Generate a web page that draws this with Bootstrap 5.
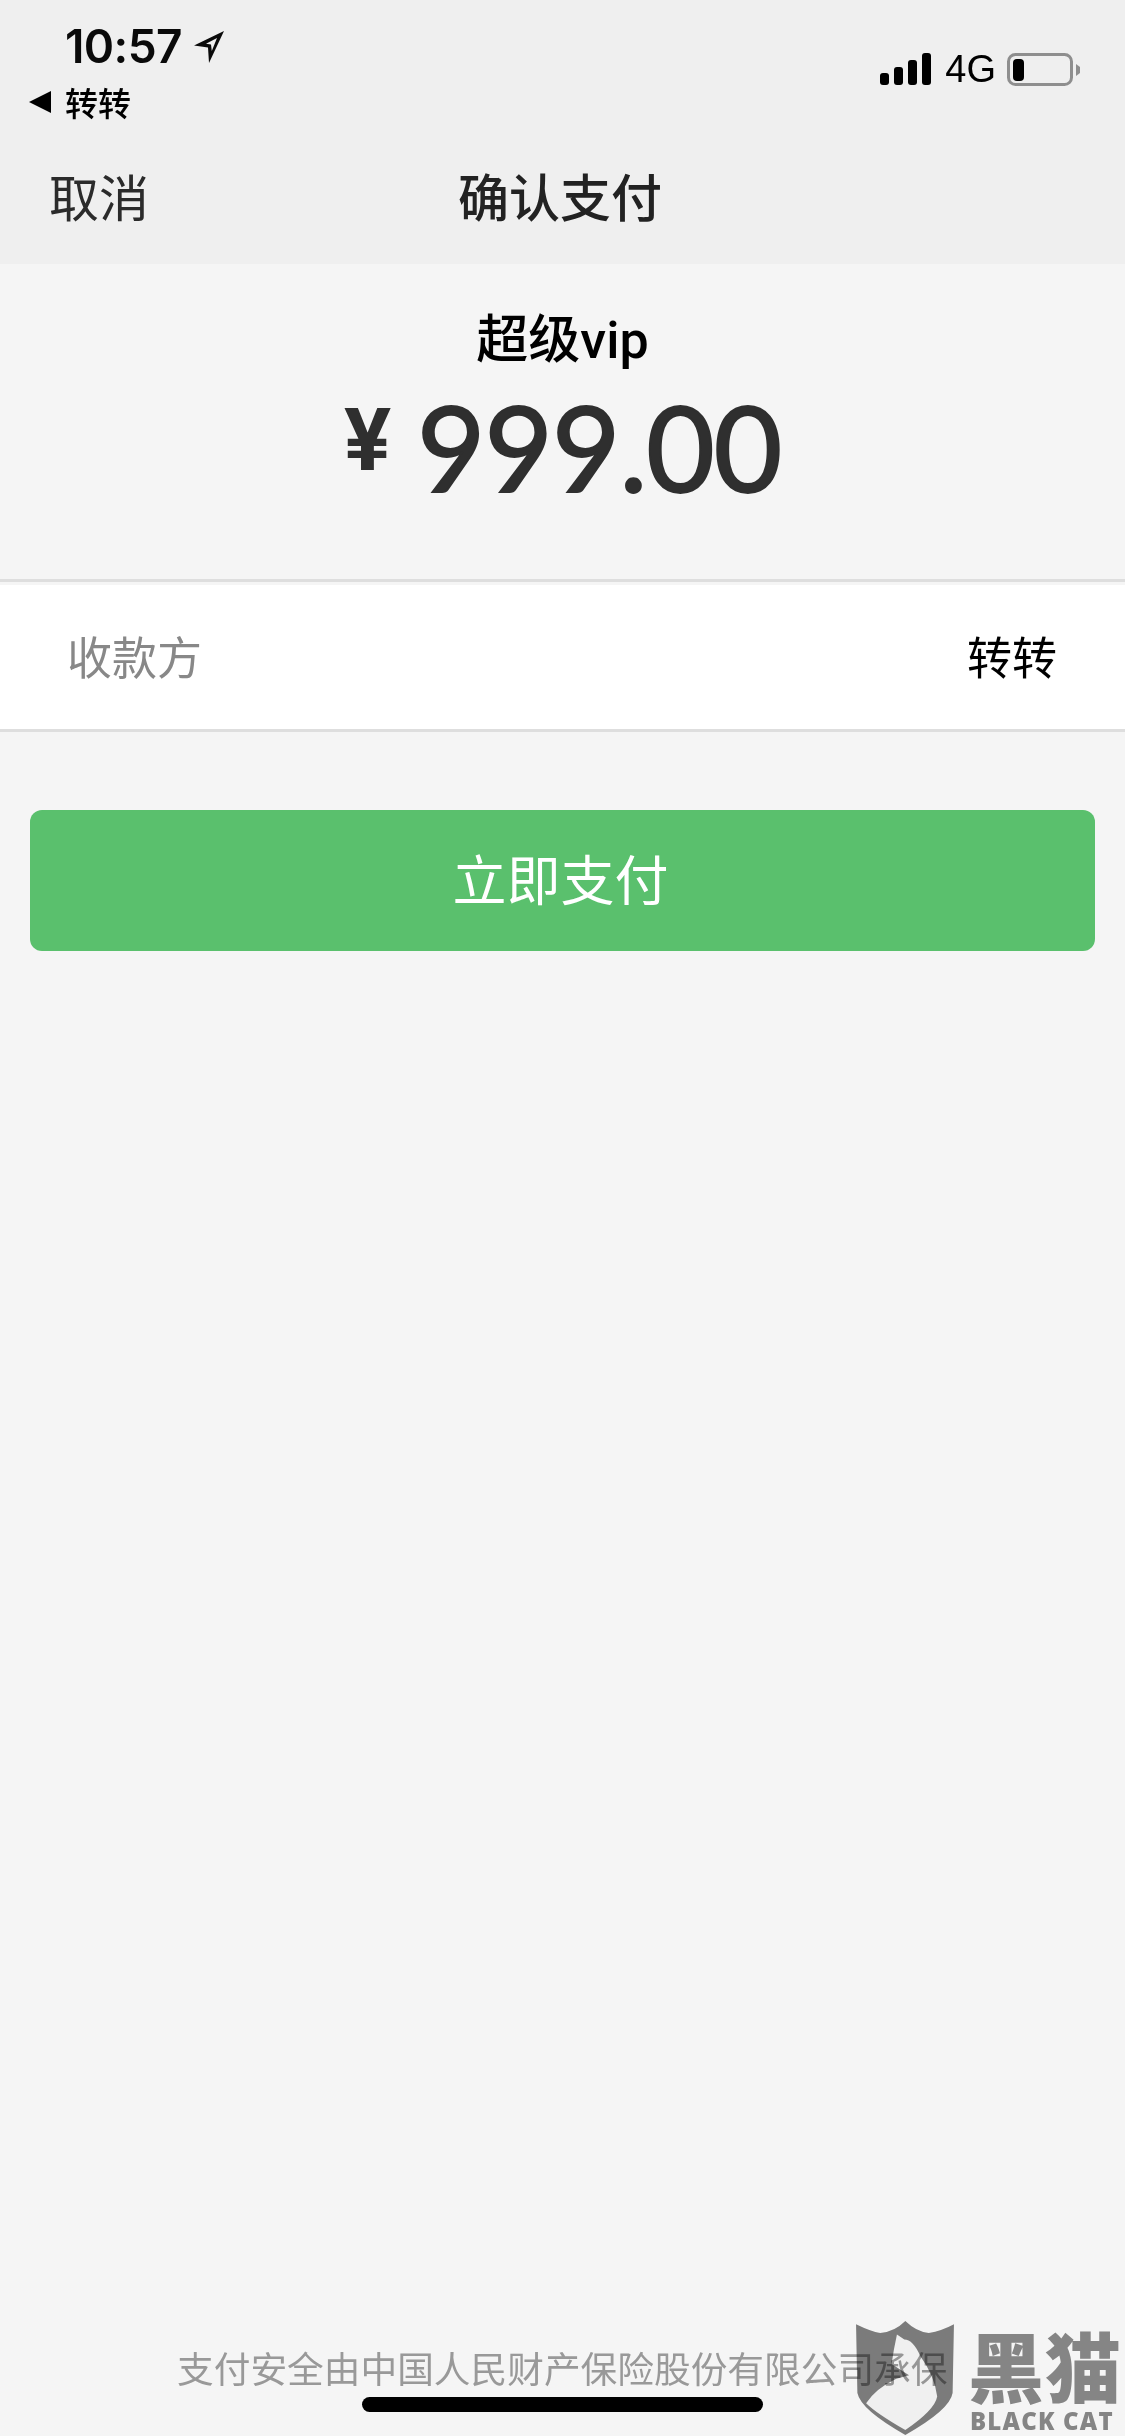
<!DOCTYPE html>
<html lang="zh-CN">
<head>
<meta charset="UTF-8">
<meta name="viewport" content="width=device-width, initial-scale=1.0">
<title>确认支付</title>
<link href="https://cdn.jsdelivr.net/npm/bootstrap@5.3.0/dist/css/bootstrap.min.css" rel="stylesheet">
<style>
html, body { margin: 0; background: #f5f5f5; }
body { font-family: "Liberation Sans", "Noto Sans CJK SC", sans-serif; }
.pay-page { width: 1125px; height: 2436px; overflow: hidden; background: #f5f5f5; font-family: "Noto Sans CJK SC", sans-serif; }

.top-area { height: 264px; background: #efefef; }
.status-row { height: 158px; padding: 0 44px 0 29px; }
.status-left { padding-top: 21px; }
.clock { font: 600 46px/50px Inter, sans-serif; color: #0a0a0a; margin-left: 36px; letter-spacing: -.6px; }
.loc-arrow { margin-left: 10px; margin-top: 2px; }
.back-app { font-size: 33px; line-height: 44px; color: #000; margin-top: 9px; font-weight: 500; }
.status-right { padding-top: 53px; }
.net-label { font: 400 38px/32px "Liberation Sans", sans-serif; color: #000; margin: 0 11px 0 13px; }
.title-row { height: 106px; padding: 7px 0 0 49px; }
.cancel-txt { font-size: 50px; line-height: 60px; color: #2b2b2b; }
.title-txt { font-size: 51px; line-height: 60px; color: #222; font-weight: 500; left: 560px; top: 7px; transform: translateX(-50%); }

.amount-area { height: 315px; padding-top: 37px; }
.prod-name { font-size: 52px; line-height: 70px; font-weight: 500; color: #000; }
.prod-name span { font-family: Roboto, sans-serif; }
.amount-row { margin-top: 11px; height: 120px; color: #2f2f2f; }
.yen { font: 700 88px/66px Roboto, sans-serif; margin-right: 26px; margin-top: 20px; }
.amount-num { font: 400 118px/120px Lato, sans-serif; letter-spacing: -1px; -webkit-text-stroke: 2px #2f2f2f; }

.payee-box { height: 153px; background: #fff; border-top: 3px solid #dedede; border-bottom: 3px solid #dedede; padding: 0 68px 0 67px; box-shadow: inset 0 3px 0 #f5f5f5; }
.payee-txt { font-size: 45px; color: #000; }
.payee-lbl { color: #888; }

.pay-wrap { padding: 78px 30px 0; }
.btn-pay { display: block; width: 100%; height: 141px; background: #5ac06d; border: 0; border-radius: 12px; color: #fff; font-size: 54px; line-height: 70px; padding: 0 4px 6px 0; }
.btn-pay:hover { background: #5ac06d; color: #fff; }

.insure-txt { position: absolute; left: 177px; top: 2344px; font-size: 36.7px; line-height: 46px; color: #999; white-space: nowrap; }
.home-bar { position: absolute; left: 362px; top: 2397px; width: 401px; height: 15px; border-radius: 8px; background: #000; }

.wm-shield { position: absolute; left: 856px; top: 2321px; width: 98px; height: 114px; mix-blend-mode: multiply; }
.wm-name { position: absolute; left: 968px; top: 2326px; font-size: 76px; line-height: 76px; font-weight: 900; color: #858585; white-space: nowrap; letter-spacing: 1px; }
.wm-en { position: absolute; left: 970px; top: 2407px; font: 800 24px/28px "Open Sans", sans-serif; color: #858585; white-space: nowrap; letter-spacing: 1.2px; }
</style>
</head>
<body>
<div class="pay-page position-relative">

    <div class="top-area">
        <div class="status-row d-flex justify-content-between">
            <div class="status-left">
                <div class="d-flex align-items-center">
                    <span class="clock">10:57</span>
                    <svg class="loc-arrow" width="34" height="34" viewBox="0 0 34 34"><path d="M32 1 L2 15.500 L16 17.500 L17 33 Z M25 8 L14 13.800 L19 14.500 L19.800 21 Z" fill="#0a0a0a" fill-rule="evenodd"/></svg>
                </div>
                <div class="back-app d-flex align-items-center">
                    <svg width="36" height="24" viewBox="0 0 36 24"><path d="M0 12 L22 1 V23 Z" fill="#000"/></svg>
                    <span>转转</span>
                </div>
            </div>
            <div class="status-right d-flex align-items-start">
                <svg width="52" height="33" viewBox="0 0 52 33" fill="#000">
                    <rect x="0" y="20" width="9" height="12" rx="3"/>
                    <rect x="14" y="14" width="9" height="18" rx="3"/>
                    <rect x="28" y="7" width="9" height="25" rx="3"/>
                    <rect x="42" y="0" width="9" height="32" rx="3"/>
                </svg>
                <span class="net-label">4G</span>
                <svg width="74" height="34" viewBox="0 0 74 34">
                    <rect x="1.500" y="1.500" width="63" height="30" rx="7" fill="none" stroke="#8e8e8e" stroke-width="3"/>
                    <rect x="6" y="6" width="11" height="22" rx="4" fill="#000"/>
                    <path d="M69 11 L73 14 V20 L69 23 Z" fill="#8e8e8e"/>
                </svg>
            </div>
        </div>
        <div class="title-row position-relative">
            <span class="cancel-txt">取消</span>
            <span class="title-txt position-absolute">确认支付</span>
        </div>
    </div>

    <div class="amount-area text-center">
        <div class="prod-name">超级<span>vip</span></div>
        <div class="amount-row d-flex justify-content-center align-items-start">
            <span class="yen">¥</span>
            <span class="amount-num">999.00</span>
        </div>
    </div>

    <div class="payee-box d-flex justify-content-between align-items-center">
        <span class="payee-txt payee-lbl">收款方</span>
        <span class="payee-txt">转转</span>
    </div>

    <div class="pay-wrap">
        <button type="button" class="btn btn-pay">立即支付</button>
    </div>

    <div class="insure-txt">支付安全由中国人民财产保险股份有限公司承保</div>
    <div class="home-bar"></div>

    <!-- watermark lies over the footer text -->
    <svg class="wm-shield" viewBox="0 0 292 340">
        <path d="M0 10 Q45 32 72 36 Q115 32 147 0 Q180 32 217 36 Q255 30 292 10 L288 215 Q280 265 147 340 Q14 265 4 215 Z" fill="#808080"/>
        <path d="M122 40 L144 55 Q170 55 192 105 Q235 165 242 225 Q235 265 147 325 Q60 275 30 245 Q60 200 120 172 L158 162 Q125 140 106 128 Q112 85 122 40 Z" fill="#fafafa"/>
    </svg>
    <div class="wm-name">黑猫</div>
    <div class="wm-en">BLACK CAT</div>
</div>
</body>
</html>
